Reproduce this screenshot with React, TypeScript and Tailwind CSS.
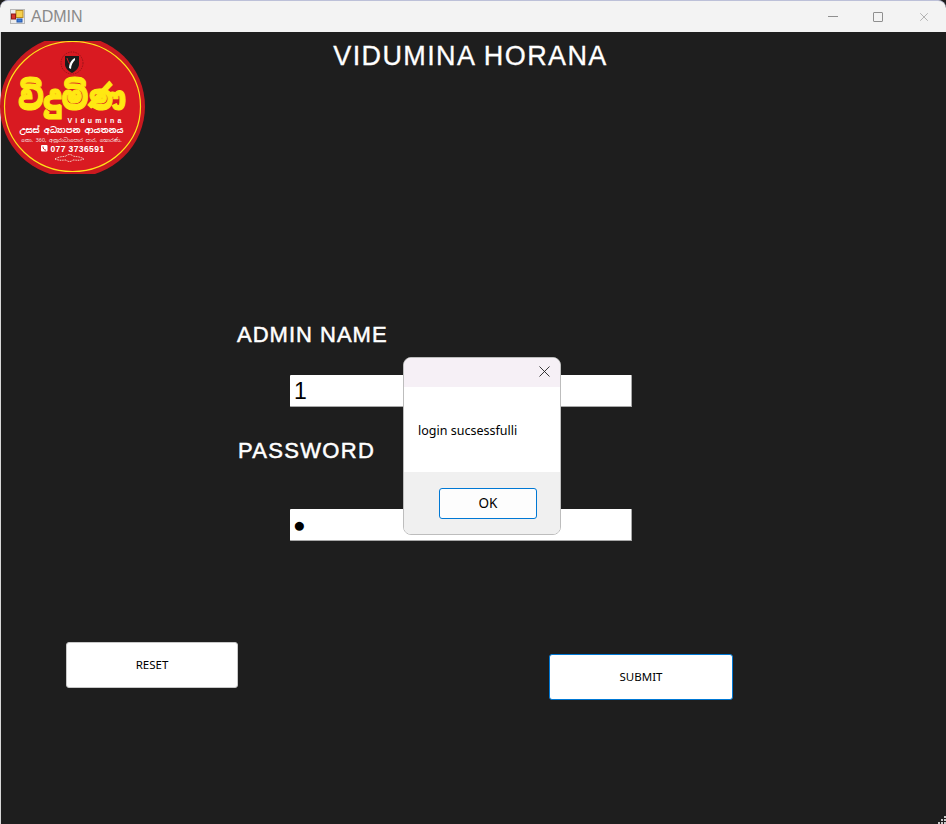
import { X } from "lucide-react";

const font = { sans: "font-['Liberation_Sans',Arial,sans-serif]", ui: "font-['Noto_Sans','Open_Sans',sans-serif]" };
const sinhala = "'Noto Sans Sinhala','Noto Sans',sans-serif";

function AppIcon() {
  return (
    <svg width="15" height="15" viewBox="0 0 15 15" aria-hidden>
      <rect x="0.5" y="0.5" width="14" height="14" fill="#ececec" stroke="#b8b8b8" />
      <rect x="6" y="1.5" width="7" height="7" fill="#f6d04d" stroke="#b98a1d" />
      <rect x="1.5" y="5" width="4" height="5" fill="#d8352a" stroke="#8e1d17" />
      <rect x="7" y="10" width="5" height="3" fill="#3f7fdc" stroke="#2456a8" />
    </svg>
  );
}

function Logo() {
  return (
    <svg width="146" height="134" viewBox="0 0 146 134" className="absolute left-[-1px] top-[9px]" aria-label="Vidumina logo">
      <defs>
        <clipPath id="logoClip">
          <rect x="0" y="0" width="146" height="133" />
        </clipPath>
      </defs>
      <g clipPath="url(#logoClip)">
        <ellipse cx="72.5" cy="65.5" rx="72.5" ry="71" fill="#c9191f" />
        <ellipse cx="72.5" cy="65.5" rx="68" ry="65" fill="#d91a21" stroke="#ffe21a" strokeWidth="1.2" />
        <circle cx="72" cy="22" r="11" fill="none" stroke="#8a1116" strokeWidth="0.8" strokeDasharray="1.5 1" />
        <path d="M65 15h14v8c0 4-3 7-7 9-4-2-7-5-7-9z" fill="#1b1b1b" />
        <path d="M75 17c-4 2-6 6-6 10l2 1c0-4 2-7 4-9z" fill="#ffffff" />
        <path d="M67 17c1 3 2 5 3 6" stroke="#d91a21" strokeWidth="1" fill="none" />
        <g transform="translate(72 69) scale(1 1.15)">
          <text x="0" y="0" textAnchor="middle" fontSize="29" fontWeight="900" fill="#ffe812" stroke="#ffe812" strokeWidth="1" fontFamily={sinhala}>විදුමිණ</text>
        </g>
        <text x="96" y="82" textAnchor="middle" fontSize="7" fontWeight="700" letterSpacing="3.2" fill="#ffffff" fontFamily="'Liberation Sans',sans-serif">Vidumina</text>
        <text x="71.5" y="92" textAnchor="middle" fontSize="8.2" fontWeight="700" fill="#ffffff" fontFamily={sinhala}>උසස් අධ්‍යාපන ආයතනය</text>
        <text x="71.5" y="101" textAnchor="middle" fontSize="5.4" fill="#f6e4e4" fontFamily={sinhala}>නො. 360, අනුරාධාපොර පාර, හොරණ.</text>
        <rect x="41" y="104" width="6.5" height="6.5" rx="1" fill="#ffffff" />
        <path d="M43 105.5c0 2 1 3.5 3 3.7" stroke="#d91a21" strokeWidth="1" fill="none" />
        <text x="77.5" y="110.5" textAnchor="middle" fontSize="8.5" fontWeight="700" letterSpacing="0.4" fill="#ffffff" fontFamily="'Liberation Sans',sans-serif">077 3736591</text>
        <path d="M55 118c5-3 8-2 11-3 2-2 5-2 7 0 3 1 6 0 11 3-5 2-8 1-11 1-2 2-5 2-7 0-3 0-6 1-11-1z" fill="none" stroke="#f7e2d6" strokeWidth="1" strokeDasharray="1 0.7" />
      </g>
    </svg>
  );
}

function Grip() {
  return (
    <div className="absolute bottom-0 right-0 grid grid-cols-3 gap-px" aria-hidden>
      {[0, 0, 1, 0, 1, 1, 1, 1, 1].map((on, i) => (
        <span key={i} className={on ? "size-[2px] bg-[#c8c8c8]" : "size-[2px]"} />
      ))}
    </div>
  );
}

function Dialog() {
  return (
    <div className={`absolute left-[403px] top-[357px] flex h-[178px] w-[158px] flex-col overflow-hidden rounded-lg border border-[#bdbdbd] bg-white text-black ${font.ui}`}>
      <div className="flex h-[29px] justify-end bg-[#f6f0f6] pr-[6px] pt-[4px]">
        <X size={19} strokeWidth={1.1} className="text-[#1a1a1a]" />
      </div>
      <div className="flex h-[85px] items-center pl-[14px] pt-[3px] text-[12.5px]">login sucsessfulli</div>
      <div className="flex-1 bg-[#f0f0f0] pl-[35px] pt-[16px]">
        <button className="h-[31px] w-[98px] rounded-[3px] border border-[#0078d4] bg-[#fdfdfd] text-[13.5px]">OK</button>
      </div>
    </div>
  );
}

export default function App() {
  return (
    <div className={`relative flex h-[824px] w-[946px] flex-col overflow-hidden bg-[#1e1e1e] ${font.sans}`}>
      <div className="flex h-[32px] shrink-0 items-center rounded-t-lg border-t border-[#bcc0d8] bg-[#f3f3f3] pl-[10px]">
        <AppIcon />
        <span className="ml-[6px] text-[16px] text-[#8a8a8a]">ADMIN</span>
        <div className="ml-auto flex items-center gap-[34px] pr-[15px] text-[#8f8f8f]">
          <span className="mr-px h-px w-[10px] bg-[#8f8f8f]" />
          <span className="size-[10px] rounded-[1px] border border-[#8f8f8f]" />
          <X size={14} strokeWidth={1.1} />
        </div>
      </div>

      <main className="relative flex-1 border-l border-[#d8d8d8]">
        <h1 className="mt-[8px] pr-[6px] text-center text-[27px] font-normal leading-[32px] tracking-[1.4px] text-white [-webkit-text-stroke:0.3px_#ffffff]">VIDUMINA HORANA</h1>
        <Logo />

        <section className="ml-[236px] mt-[250px]">
          <p className="text-[22px] leading-[26px] tracking-[1px] text-white [-webkit-text-stroke:0.5px_#ffffff]">ADMIN NAME</p>
          <div className="ml-[53px] mt-[27px] flex h-[32px] w-[342px] items-center rounded-[1px] border-b border-r border-[#a8a8a8] bg-white pl-[4px] pt-[2px] text-[23px] text-black">1</div>
          <p className="ml-px mt-[31px] text-[22px] leading-[26px] tracking-[1.3px] text-white [-webkit-text-stroke:0.5px_#ffffff]">PASSWORD</p>
          <div className="ml-[53px] mt-[45px] flex h-[32px] w-[342px] items-center rounded-[1px] border-b border-r border-[#a8a8a8] bg-white pl-[3px] text-[21px] text-black">●</div>
        </section>

        <section className={`ml-[65px] mt-[101px] flex items-start text-[11.5px] text-black ${font.ui}`}>
          <button className="h-[46px] w-[172px] rounded-[3px] border border-[#c8c8c8] bg-white">RESET</button>
          <button className="ml-[311px] mt-[12px] h-[46px] w-[184px] rounded-[3px] border border-[#0078d4] bg-white">SUBMIT</button>
        </section>
      </main>

      <Dialog />
      <Grip />
    </div>
  );
}
